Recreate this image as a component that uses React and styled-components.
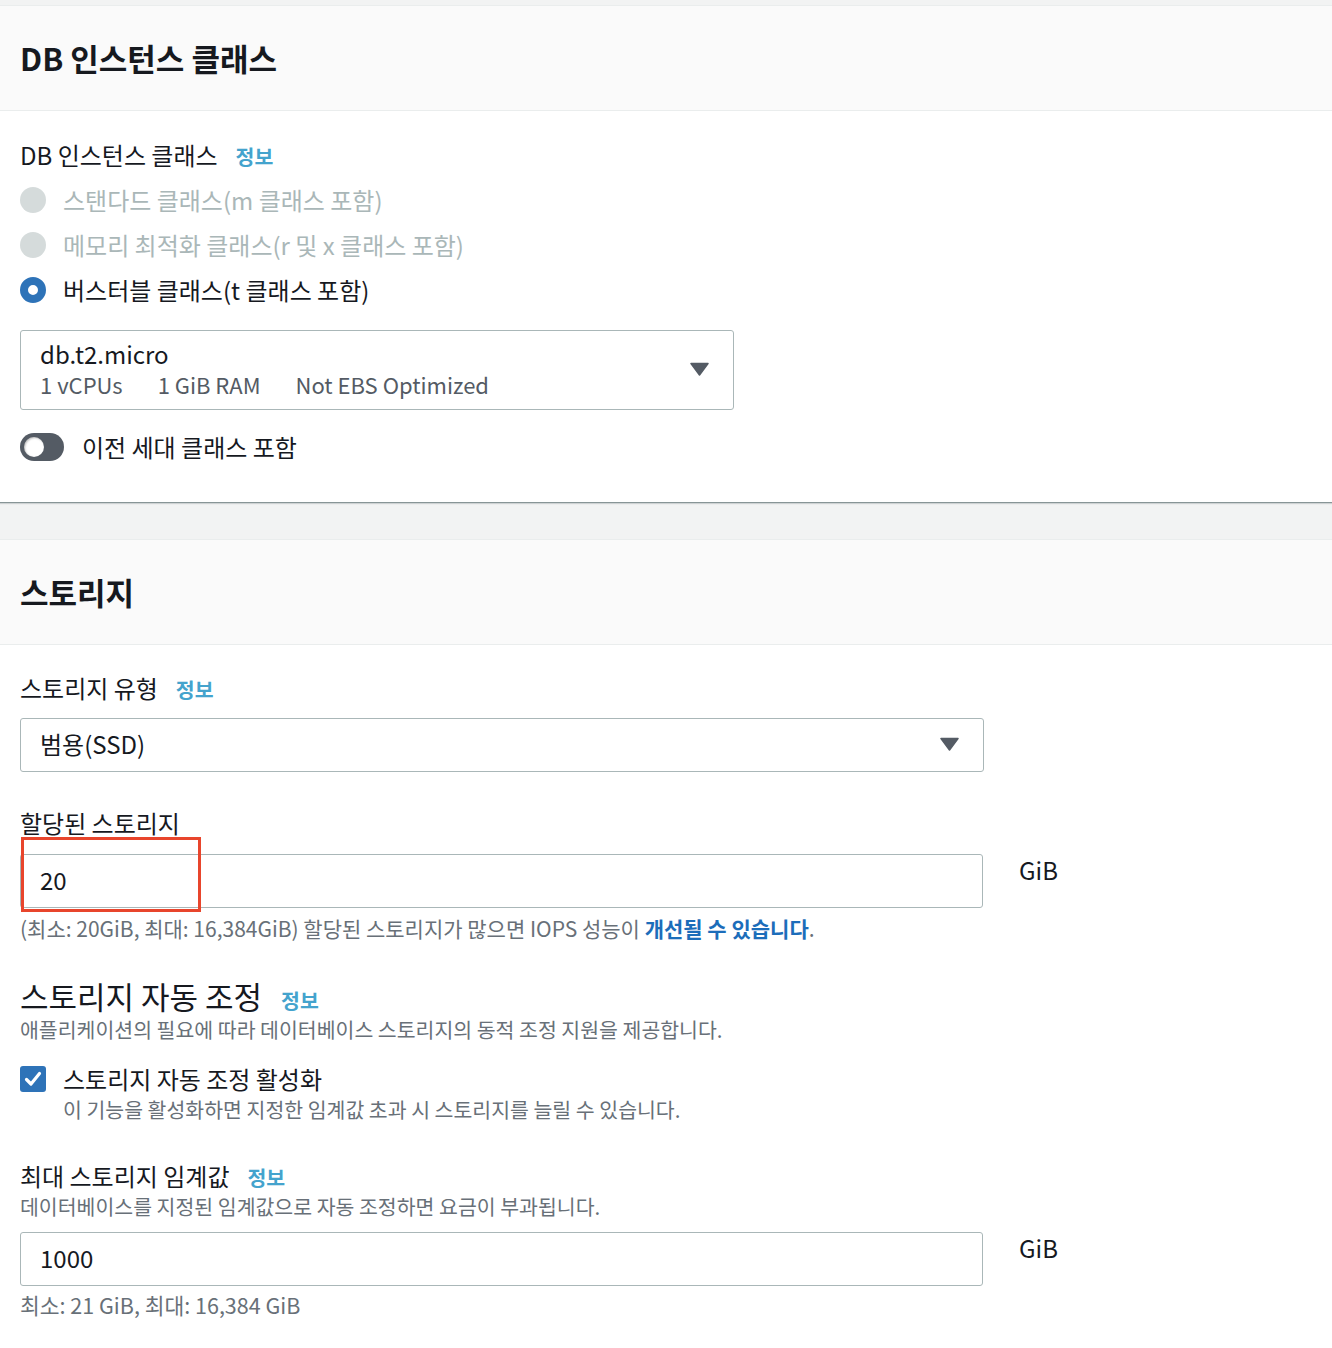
import React from "react";
import styled, { createGlobalStyle } from "styled-components";

const Global = createGlobalStyle`
  html, body { margin: 0; padding: 0; background: #f2f3f3; }
  body { font-family: "Noto Sans CJK KR", "Noto Sans", sans-serif; color: #16191f; }
  * { box-sizing: border-box; }
`;

const Page = styled.div`
  padding-top: 5px;
  width: 1332px;
  min-height: 1348px;
  background: #f2f3f3;
  display: flex;
  flex-direction: column;
  gap: 37px;
`;

const Card = styled.section`
  background: #fff;
  border-top: 1px solid #eaeded;
  box-shadow: ${(p) => (p.$shadow ? "0 1px 0 0 #879596, 0 2px 1px 0 rgba(0,28,36,0.15)" : "none")};
  flex: ${(p) => (p.$grow ? 1 : "none")};
`;

const CardHeader = styled.header`
  height: 105px;
  background: #fafafa;
  border-bottom: 1px solid #eaeded;
  display: flex;
  align-items: center;
  padding: 0 20px;
`;

const Heading = styled.h2`
  margin: 0;
  font-size: 31px;
  font-weight: 700;
  line-height: 40px;
  color: #16191f;
`;

const CardBody = styled.div`
  padding: ${(p) => p.$pad || "28px 20px 41px"};
`;

const Label = styled.div`
  font-size: 24px;
  line-height: 32px;
  height: 32px;
  margin-top: ${(p) => p.$mt || 0}px;
  white-space: nowrap;
`;

const SubHeading = styled.div`
  font-size: 31px;
  line-height: 40px;
  height: 40px;
  margin-top: ${(p) => p.$mt || 0}px;
  white-space: nowrap;
`;

const Info = styled.span`
  display: inline-block;
  margin-left: ${(p) => p.$ml || 18}px;
  font-size: 20.5px;
  line-height: 1;
  font-weight: 700;
  color: #44a3cd;
`;

const Desc = styled.div`
  font-size: ${(p) => p.$fs || 20.5}px;
  line-height: ${(p) => p.$lh || 28}px;
  color: #687078;
  margin-top: ${(p) => p.$mt || 0}px;
  padding-left: ${(p) => p.$indent || 0}px;
  white-space: nowrap;
`;

const Strong = styled.span`
  color: #1c6dba;
  font-weight: 700;
`;

const RadioList = styled.div`
  margin-top: 6px;
  display: flex;
  flex-direction: column;
`;

const RadioRow = styled.label`
  height: 45px;
  display: flex;
  align-items: center;
  gap: 17px;
  font-size: 24px;
  line-height: 32px;
  color: ${(p) => (p.$disabled ? "#aab7b8" : "#16191f")};
`;

const RadioDot = styled.span`
  width: 26px;
  height: 26px;
  border-radius: 50%;
  flex: none;
  background: ${(p) => (p.$checked ? "#fff" : "#d5dbdb")};
  border: ${(p) => (p.$checked ? "8px solid #2e73b8" : "none")};
`;

const SelectBox = styled.div`
  margin-top: ${(p) => p.$mt || 0}px;
  width: ${(p) => p.$w}px;
  height: ${(p) => p.$h}px;
  border: 1px solid #aab7b8;
  border-radius: 3px;
  display: flex;
  align-items: ${(p) => (p.$multi ? "flex-start" : "center")};
  justify-content: space-between;
  padding: ${(p) => (p.$multi ? "8px 24px 8px 19px" : "0 24px 2px 19px")};
  background: #fff;
`;

const SelectLines = styled.div`
  display: flex;
  flex-direction: column;
`;

const SelectMain = styled.div`
  font-size: 24px;
  line-height: 30px;
  color: #16191f;
`;

const SelectMeta = styled.div`
  font-size: 22px;
  line-height: 31px;
  color: #545b64;
  display: flex;
  gap: 35px;
`;

const Caret = styled.svg`
  width: 19px;
  height: 14px;
  flex: none;
  align-self: center;
  margin-bottom: ${(p) => p.$mb || 0}px;
`;

const ToggleRow = styled.div`
  margin-top: 23px;
  height: 28px;
  display: flex;
  align-items: center;
  gap: 18px;
  font-size: 24px;
  line-height: 28px;
`;

const ToggleTrack = styled.span`
  width: 44px;
  height: 28px;
  border-radius: 14px;
  background: #545b64;
  display: flex;
  align-items: center;
  padding-left: 4px;
  flex: none;
`;

const ToggleKnob = styled.span`
  width: 20px;
  height: 20px;
  border-radius: 50%;
  background: #fff;
  box-shadow: inset 1px 1px 2px rgba(0, 0, 0, 0.25);
`;

const InputRow = styled.div`
  position: relative;
  margin-top: ${(p) => p.$mt || 0}px;
  display: flex;
  align-items: flex-start;
  gap: 36px;
`;

const TextInput = styled.div`
  width: 963px;
  height: 54px;
  border: 1px solid #aab7b8;
  border-radius: 3px;
  display: flex;
  align-items: center;
  padding: 0 0 3px 19px;
  font-size: 24px;
  color: #16191f;
  background: #fff;
`;

const Unit = styled.span`
  font-size: 24px;
  line-height: 32px;
  color: #16191f;
`;

const Highlight = styled.div`
  position: absolute;
  left: 1px;
  top: -17px;
  width: 180px;
  height: 75px;
  border: 3px solid #e8452c;
  pointer-events: none;
`;

const CheckRow = styled.div`
  margin-top: 21px;
  height: 32px;
  display: flex;
  align-items: center;
  gap: 17px;
  font-size: 24px;
  line-height: 32px;
`;

const CheckBox = styled.span`
  width: 26px;
  height: 26px;
  border-radius: 3px;
  background: #2e73b8;
  display: flex;
  align-items: center;
  justify-content: center;
  flex: none;
`;

const Tri = ({ mb }) => (
  <Caret viewBox="0 0 19 14" $mb={mb}>
    <path d="M1 1.5 H18 L9.5 13 Z" fill="#545b64" stroke="#545b64" strokeWidth="1.5" strokeLinejoin="round" />
  </Caret>
);

export default function App() {
  return (
    <>
      <Global />
      <Page>
        <Card $shadow>
          <CardHeader>
            <Heading>DB 인스턴스 클래스</Heading>
          </CardHeader>
          <CardBody>
            <Label>
              DB 인스턴스 클래스<Info>정보</Info>
            </Label>
            <RadioList>
              <RadioRow $disabled>
                <RadioDot />
                스탠다드 클래스(m 클래스 포함)
              </RadioRow>
              <RadioRow $disabled>
                <RadioDot />
                메모리 최적화 클래스(r 및 x 클래스 포함)
              </RadioRow>
              <RadioRow>
                <RadioDot $checked />
                버스터블 클래스(t 클래스 포함)
              </RadioRow>
            </RadioList>
            <SelectBox $mt={18} $w={714} $h={80} $multi>
              <SelectLines>
                <SelectMain>db.t2.micro</SelectMain>
                <SelectMeta>
                  <span>1 vCPUs</span>
                  <span>1 GiB RAM</span>
                  <span>Not EBS Optimized</span>
                </SelectMeta>
              </SelectLines>
              <Tri mb={2} />
            </SelectBox>
            <ToggleRow>
              <ToggleTrack>
                <ToggleKnob />
              </ToggleTrack>
              이전 세대 클래스 포함
            </ToggleRow>
          </CardBody>
        </Card>

        <Card $grow>
          <CardHeader>
            <Heading>스토리지</Heading>
          </CardHeader>
          <CardBody $pad="27px 20px 40px">
            <Label>
              스토리지 유형<Info>정보</Info>
            </Label>
            <SelectBox $mt={14} $w={964} $h={54}>
              <SelectMain>범용(SSD)</SelectMain>
              <Tri />
            </SelectBox>

            <Label $mt={35}>할당된 스토리지</Label>
            <InputRow $mt={15}>
              <TextInput>20</TextInput>
              <Unit>GiB</Unit>
              <Highlight />
            </InputRow>
            <Desc $mt={6} $fs={21}>
              (최소: 20GiB, 최대: 16,384GiB) 할당된 스토리지가 많으면 IOPS 성능이 <Strong>개선될 수 있습니다</Strong>.
            </Desc>

            <SubHeading $mt={34}>
              스토리지 자동 조정<Info $ml={19}>정보</Info>
            </SubHeading>
            <Desc $lh={26}>애플리케이션의 필요에 따라 데이터베이스 스토리지의 동적 조정 지원을 제공합니다.</Desc>

            <CheckRow>
              <CheckBox>
                <svg width="18" height="16" viewBox="0 0 18 16">
                  <path d="M2.5 8.5 L7 13 L15.5 2.5" fill="none" stroke="#fff" strokeWidth="3.2" strokeLinecap="round" strokeLinejoin="round" />
                </svg>
              </CheckBox>
              스토리지 자동 조정 활성화
            </CheckRow>
            <Desc $indent={43}>이 기능을 활성화하면 지정한 임계값 초과 시 스토리지를 늘릴 수 있습니다.</Desc>

            <Label $mt={37}>
              최대 스토리지 임계값<Info>정보</Info>
            </Label>
            <Desc>데이터베이스를 지정된 임계값으로 자동 조정하면 요금이 부과됩니다.</Desc>
            <InputRow $mt={12}>
              <TextInput>1000</TextInput>
              <Unit>GiB</Unit>
            </InputRow>
            <Desc $mt={5} $fs={21.5}>최소: 21 GiB, 최대: 16,384 GiB</Desc>
          </CardBody>
        </Card>
      </Page>
    </>
  );
}
